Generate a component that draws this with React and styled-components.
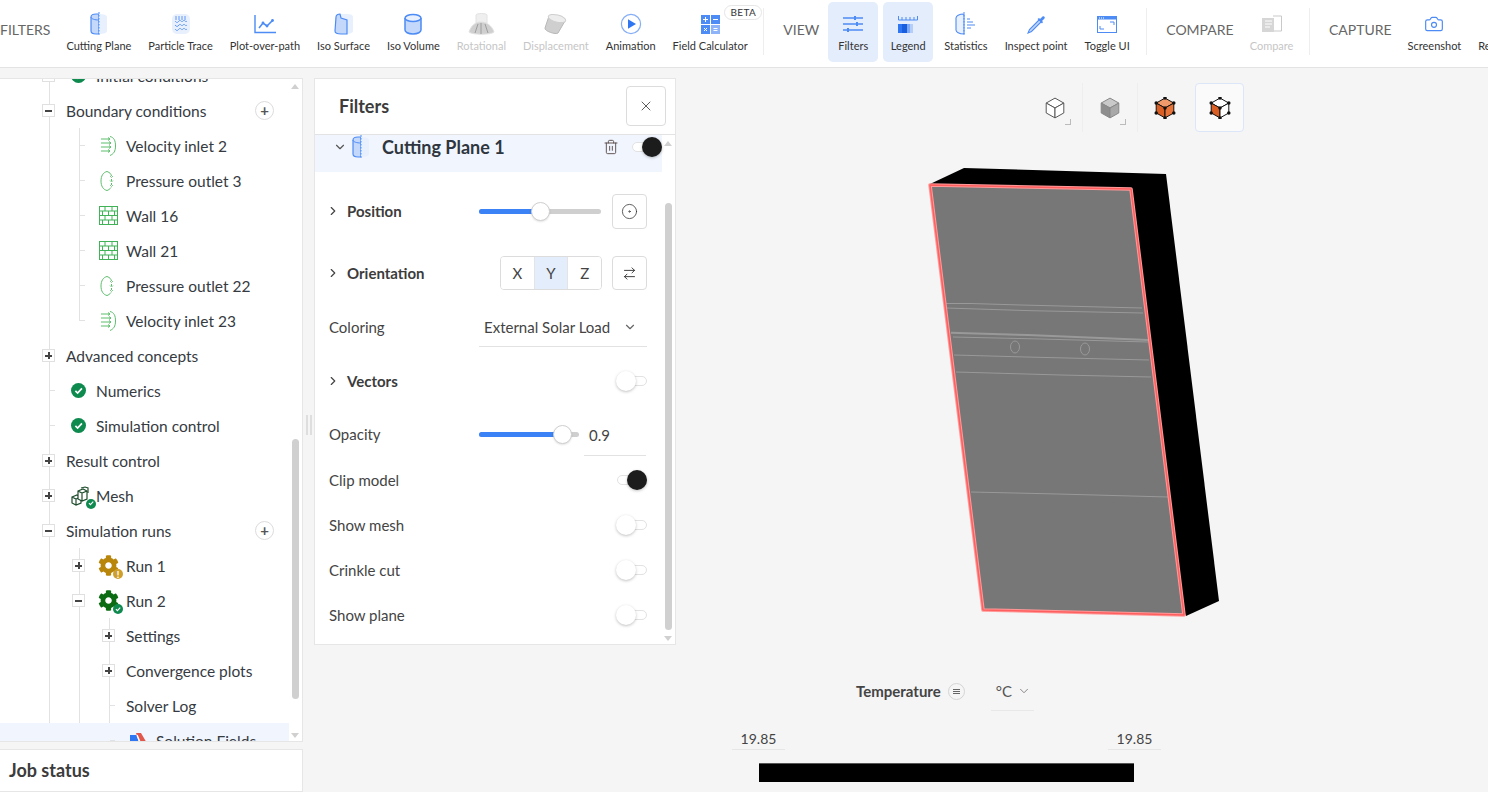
import React from 'react';
import styled, { createGlobalStyle } from 'styled-components';
import { FaCog } from 'react-icons/fa';
import { Camera, ChevronDown, ChevronRight, CircleDot, ArrowRightLeft, Trash2, X } from 'lucide-react';

const GlobalStyle = createGlobalStyle`
  html, body { margin: 0; height: 100%; overflow: hidden; background: #f5f5f5; }
  body { font-family: Lato, "Open Sans", sans-serif; color: #363b42; }
  * { box-sizing: border-box; }
`;

const BLUE = '#4d8bf5';
const PALE = '#c3d8fb';
const FAINT = '#e9f0fd';
const GREY = '#bdbdbd';

const CuttingPlaneIcon = () => (
  <svg width="20" height="24" viewBox="0 0 20 24">
    <path d="M10 2v20h-3c-3 0-5-1-5-3V5c0-2 2-3 5-3z" fill={PALE} stroke={BLUE} strokeWidth="1.2" />
    <path d="M10 2c5 0 8 1 8 3v14c0 2-3 3-8 3z" fill={FAINT} />
    <path d="M2 5c0 2 4 3 8 3" fill="none" stroke={BLUE} strokeWidth="1" />
    <path d="M10 0v24" stroke={BLUE} strokeWidth="1" strokeDasharray="1.5 1.5" />
  </svg>
);

const ParticleIcon = () => (
  <svg width="20" height="22" viewBox="0 0 20 22">
    <rect x="1" y="1" width="18" height="20" rx="5" fill={FAINT} />
    <path d="M5 3v4M8 3v4M11 3v4M14 3v4M4 8c2 2 2 2 4 0s2 2 4 0 2 2 4 0M4 12c2 2 2 2 4 0s2 2 4 0 2 2 4 0M4 16c2 2 2 2 4 0s2 2 4 0 2 2 4 0" fill="none" stroke={BLUE} strokeWidth="0.9" />
  </svg>
);

const PlotIcon = () => (
  <svg width="22" height="20" viewBox="0 0 22 20">
    <path d="M1 1v17.5h21" fill="none" stroke={BLUE} strokeWidth="1.4" />
    <path d="M5 14l4-5 4 3 6-6" fill="none" stroke={BLUE} strokeWidth="1.6" />
    <circle cx="9" cy="9" r="1.4" fill={BLUE} />
    <circle cx="13" cy="12" r="1.4" fill={BLUE} />
    <circle cx="18.5" cy="6.5" r="1.4" fill={BLUE} />
  </svg>
);

const IsoSurfaceIcon = () => (
  <svg width="20" height="22" viewBox="0 0 20 22">
    <path d="M6 1h7c4 0 6 1 6 3v14c0 2-3 3-7 3z" fill={FAINT} />
    <path d="M2 4c0-2 2-3 4-3l1 4 6 2v14H7c-4 0-6-1-6-3z" fill={PALE} stroke={BLUE} strokeWidth="1.2" />
  </svg>
);

const IsoVolumeIcon = () => (
  <svg width="20" height="22" viewBox="0 0 20 22">
    <path d="M2 5v12c0 2 3 4 8 4s8-2 8-4V5" fill={PALE} stroke={BLUE} strokeWidth="1.5" />
    <ellipse cx="10" cy="5" rx="8" ry="3.6" fill={FAINT} stroke={BLUE} strokeWidth="1.5" />
  </svg>
);

const RotationalIcon = () => (
  <svg width="27" height="26" viewBox="0 0 27 26">
    <path d="M8 4c0-2 11-2 11 0v8H8z" fill="#efefef" stroke="#e2e2e2" />
    <path d="M1 21c2-6 6-10 12-10s11 4 13 10c-3 3-22 3-25 0z" fill="#cfcfcf" stroke="#e2e2e2" />
    <path d="M10 13l-3 9M13 12v11M17 13l3 9" stroke="#9e9e9e" />
  </svg>
);

const DisplacementIcon = () => (
  <svg width="24" height="22" viewBox="0 0 24 22">
    <path d="M5 3L1 15c-1 3 11 7 13 5l7-12z" fill="#cfcfcf" stroke="#b8b8b8" />
    <ellipse cx="13" cy="5.5" rx="9" ry="3.6" transform="rotate(14 13 5.5)" fill="#ededed" stroke="#cfcfcf" />
  </svg>
);

const AnimationIcon = () => (
  <svg width="22" height="22" viewBox="0 0 22 22">
    <circle cx="11" cy="11" r="9.6" fill="#fff" stroke="#86aef6" strokeWidth="1.2" />
    <path d="M8 6.3l8 4.7-8 4.7z" fill="#2f76f2" />
  </svg>
);

const CalculatorIcon = () => (
  <svg width="19" height="19" viewBox="0 0 19 19">
    <rect width="9" height="9" fill={BLUE} />
    <rect x="10" width="9" height="9" fill={BLUE} />
    <rect y="10" width="9" height="9" fill={BLUE} />
    <rect x="10" y="10" width="9" height="9" fill="#8db4f8" />
    <path d="M2 4.5h5M4.5 2v5M12 4.5h5M12.5 13.5h4M12.5 15.5h4M3 13l3 3M6 13l-3 3" stroke="#fff" strokeWidth="1" />
  </svg>
);

const SlidersIcon = () => (
  <svg width="20" height="18" viewBox="0 0 20 18">
    <path d="M0 3h20M0 9h20M0 15h20" stroke={BLUE} strokeWidth="1.3" />
    <rect x="11" y="1" width="2" height="4" fill={BLUE} />
    <rect x="13" y="7" width="2" height="4" fill={BLUE} />
    <rect x="4" y="13" width="2" height="4" fill={BLUE} />
  </svg>
);

const LegendIcon = () => (
  <svg width="20" height="17" viewBox="0 0 20 17">
    <path d="M.5 0v4h19V0M4 1v3M8 1v3M12 1v3M16 1v3" fill="none" stroke={BLUE} strokeWidth="1" />
    <rect y="8" width="7" height="9" fill="#2f76f2" />
    <rect x="4" y="8" width="5" height="9" fill="#1a5ee0" />
    <rect x="9" y="8" width="3" height="9" fill="#7ea9f6" />
    <rect x="12" y="8" width="3" height="9" fill="#b4cdfa" />
  </svg>
);

const StatisticsIcon = () => (
  <svg width="22" height="24" viewBox="0 0 22 24">
    <path d="M9 2C4 2 1 4 1 6v12c0 2 3 4 8 4z" fill={FAINT} stroke={BLUE} strokeWidth="1.1" />
    <path d="M9 0v24" stroke={BLUE} strokeDasharray="1.5 1.5" />
    <path d="M12 7h3M12 10h6M12 13h8M12 16h4" stroke={BLUE} strokeWidth="1.1" />
  </svg>
);

const PipetteIcon = () => (
  <svg width="19" height="19" viewBox="0 0 19 19">
    <path d="M12.5 4.5L2.5 14.5 1 18l3.5-1.5 10-10z" fill={PALE} stroke={BLUE} strokeWidth="1.1" />
    <path d="M10.5 4L15 8.5l1-1.5-1-1 2.3-2.3c1.4-1.4-.6-3.4-2-2L13 4 12 3z" fill={BLUE} />
  </svg>
);

const ToggleUiIcon = () => (
  <svg width="20" height="17" viewBox="0 0 20 17">
    <rect x=".5" y=".5" width="19" height="16" fill="#fff" stroke={BLUE} />
    <rect width="20" height="3.5" fill={BLUE} />
    <path d="M2 2h1M4 2h1M6 2h1" stroke="#fff" />
    <path d="M13 6h4v3M3 10v3h4" fill="none" stroke={BLUE} />
  </svg>
);

const CompareIcon = () => (
  <svg width="20" height="18" viewBox="0 0 20 18">
    <path d="M11 1h8.5v15H11" fill="none" stroke="#c9c9c9" />
    <path d="M0 3h12v14H0z" fill="#d6d6d6" />
    <path d="M3 6h7M3 9h7M3 12h5" stroke="#fff" />
  </svg>
);

const VelocityIcon = () => (
  <svg width="16" height="20" viewBox="0 0 16 20" fill="none" stroke="#5cbd6b" strokeWidth="1">
    <path d="M1 3h9M1 7h10M1 11h10M1 15h9" />
    <path d="M8 1.5l2 1.5-2 1.5M9 5.5l2 1.5-2 1.5M9 9.5l2 1.5-2 1.5M8 13.5l2 1.5-2 1.5" />
    <path d="M10 .5c4 1 5.500 4 5.500 9.500s-2 8-5.500 9.500" />
  </svg>
);

const PressureIcon = () => (
  <svg width="16" height="20" viewBox="0 0 16 20" fill="none" stroke="#5cbd6b" strokeWidth="1">
    <path d="M7 .5C3 1.500 1 5 1 10s2 8.500 6 9.500" />
    <path d="M7 .5c3 1 4 2.500 4.500 4.500M11.500 8v2M11.500 12v2M11 16.500c-1 1.500-2.500 2.500-4 3" />
    <path d="M10 5l1.500 1.500L13 5M10 9.500l1.500 1.500 1.500-1.500M10 14l1.500 1.500L13 14" strokeWidth=".8" />
  </svg>
);

const WallIcon = () => (
  <svg width="19" height="19" viewBox="0 0 19 19" fill="none" stroke="#3fb356" strokeWidth="1">
    <rect x=".5" y=".5" width="18" height="18" />
    <path d="M1 5h17M1 9.500h17M1 14h17M6 1v4M13 1v4M3.500 5v4.500M9.500 5v4.500M15.500 5v4.500M6 9.500V14M13 9.500V14M3.500 14v4.500M9.500 14v4.500M15.500 14v4.500" />
  </svg>
);

const CheckCircle = styled.span`
  display: inline-flex;
  align-items: center;
  justify-content: center;
  width: ${(p) => p.$size}px;
  height: ${(p) => p.$size}px;
  border-radius: 50%;
  background: ${(p) => p.$color || '#0f8a4f'};
  flex: none;
`;

const CheckBadge = ({ size = 15 }) => (
  <CheckCircle $size={size}>
    <svg width={size * 0.62} height={size * 0.62} viewBox="0 0 10 10">
      <path d="M1.500 5.200l2.400 2.400 4.600-5" fill="none" stroke="#fff" strokeWidth="1.800" />
    </svg>
  </CheckCircle>
);

const BadgeSpot = styled.span`
  position: absolute;
  right: ${(p) => p.$right}px;
  bottom: -3px;
  display: flex;
`;

const WarnMark = styled.span`
  color: #fff;
  font-size: 9px;
  font-weight: 900;
  line-height: 1;
`;

const IconStack = styled.span`
  position: relative;
  display: flex;
  margin-left: ${(p) => p.$shift || 0}px;
`;

const MeshIcon = () => (
  <IconStack>
    <svg width="19" height="20" viewBox="0 0 19 20" fill="#fff" stroke="#1f4d2e" strokeWidth="1.200">
      <path d="M1 11l5-2 4 2v6l-5 2-4-2zM1 11l4 2 5-2M5 13v6" />
      <path d="M7 5l5-2 4 2v8l-5 2-4-2zM7 5l4 2 5-2M11 7v8" />
      <path d="M10 2l4-1 3 1v5" fill="none" />
    </svg>
    <BadgeSpot $right={-6}><CheckBadge size={10} /></BadgeSpot>
  </IconStack>
);

const GearIcon = ({ warn }) => (
  <IconStack $shift={-2}>
    <FaCog size={21} color={warn ? '#b8860b' : '#0b6b12'} />
    <BadgeSpot $right={-4}>
      {warn
        ? <CheckCircle $size={10} $color="#cf9f2e"><WarnMark>!</WarnMark></CheckCircle>
        : <CheckBadge size={10} />}
    </BadgeSpot>
  </IconStack>
);

const SolutionIcon = () => (
  <svg width="18" height="16" viewBox="0 0 18 16">
    <path d="M0 2h7l3 14H0z" fill="#2f76f2" />
    <path d="M6 0h5l7 12v4h-6z" fill="#e2574c" />
    <path d="M7 2l5 12" stroke="#fff" strokeWidth="1.500" />
  </svg>
);

const Hex = ({ top, left, right, stroke = '#555', dots }) => {
  const points = [[10, 1], [18, 5.500], [18, 14.500], [10, 19], [2, 14.500], [2, 5.500], [10, 10]];
  return (
    <svg width="22" height="22" viewBox="0 0 20 20">
      <path d="M10 1l8 4.500L10 10 2 5.500z" fill={top} stroke={stroke} strokeWidth=".9" />
      <path d="M2 5.500L10 10v9l-8-4.500z" fill={left} stroke={stroke} strokeWidth=".9" />
      <path d="M18 5.500L10 10v9l8-4.500z" fill={right} stroke={stroke} strokeWidth=".9" />
      {dots && points.map(([x, y]) => <circle key={`${x}-${y}`} cx={x} cy={y} r="1.600" fill="#111" />)}
    </svg>
  );
};

const filterTools = [
  { label: 'Cutting Plane', icon: <CuttingPlaneIcon /> },
  { label: 'Particle Trace', icon: <ParticleIcon /> },
  { label: 'Plot-over-path', icon: <PlotIcon /> },
  { label: 'Iso Surface', icon: <IsoSurfaceIcon /> },
  { label: 'Iso Volume', icon: <IsoVolumeIcon /> },
  { label: 'Rotational', icon: <RotationalIcon />, off: true },
  { label: 'Displacement', icon: <DisplacementIcon />, off: true },
  { label: 'Animation', icon: <AnimationIcon /> },
  { label: 'Field Calculator', icon: <CalculatorIcon />, beta: true },
];

const viewTools = [
  { label: 'Filters', icon: <SlidersIcon />, active: true },
  { label: 'Legend', icon: <LegendIcon />, active: true },
  { label: 'Statistics', icon: <StatisticsIcon /> },
  { label: 'Inspect point', icon: <PipetteIcon /> },
  { label: 'Toggle UI', icon: <ToggleUiIcon /> },
];

const Page = styled.div`
  width: 1488px;
  height: 792px;
  overflow: hidden;
  display: flex;
  flex-direction: column;
`;

const Toolbar = styled.header`
  height: 68px;
  flex: none;
  background: #fff;
  border-bottom: 1px solid #e3e3e3;
  display: flex;
  align-items: flex-start;
  white-space: nowrap;
  overflow: hidden;
`;

const SectionLabel = styled.span`
  font-size: 14px;
  line-height: 60px;
  color: #666;
  margin-right: ${(p) => p.$gap}px;
`;

const Tool = styled.button`
  position: relative;
  flex: none;
  height: 60px;
  margin: 2px ${(p) => (p.$active ? 2.5 : 0)}px 0;
  padding: 0;
  width: ${(p) => (p.$active ? '50px' : 'auto')};
  padding-inline: ${(p) => (p.$active ? 0 : 8.5)}px;
  border: 0;
  border-radius: 5px;
  background: ${(p) => (p.$active ? '#e4edfc' : 'transparent')};
  display: flex;
  flex-direction: column;
  align-items: center;
  font-family: inherit;
  font-size: 11px;
  color: ${(p) => (p.$off ? '#c6c6c6' : '#333')};
`;

const ToolIcon = styled.span`
  height: 37px;
  display: flex;
  align-items: center;
  justify-content: center;
  padding-top: 7px;
`;

const ToolText = styled.span`
  line-height: 14px;
`;

const Beta = styled.span`
  position: absolute;
  top: 3px;
  right: -6px;
  padding: 0 5px;
  height: 15px;
  line-height: 13px;
  border: 1px solid #e6e6e6;
  border-radius: 8px;
  background: #fff;
  font-size: 10px;
  letter-spacing: .4px;
`;

const Rule = styled.i`
  flex: none;
  width: 1px;
  height: 47px;
  margin: 8px 19px 0 ${(p) => p.$left}px;
  background: #eee;
`;

const Workspace = styled.main`
  flex: 1;
  min-height: 0;
  display: flex;
`;

const LeftColumn = styled.div`
  flex: none;
  width: 303px;
  padding-top: 10px;
  display: flex;
  flex-direction: column;
  gap: 7px;
`;

const TreePanel = styled.section`
  position: relative;
  height: 664px;
  background: #fff;
  border: 1px solid #e6e6e6;
  border-left: 0;
  overflow: hidden;
`;

const Tree = styled.div`
  margin-top: -21px;
  width: 289px;
`;

const Branch = styled.div`
  position: relative;
  &::before {
    content: "";
    position: absolute;
    left: ${(p) => 49 + p.$depth * 30}px;
    top: 0;
    bottom: ${(p) => (p.$open ? '-20px' : '17px')};
    width: 1px;
    background: #e2e2e2;
  }
`;

const Row = styled.div`
  position: relative;
  height: 35px;
  display: flex;
  align-items: center;
  font-size: 15.500px;
  padding: 0 15px 0 ${(p) => 42 + p.$depth * 30}px;
  background: ${(p) => (p.$selected ? '#f1f6fe' : 'transparent')};
  z-index: 1;
`;

const Tick = styled.span`
  position: absolute;
  left: ${(p) => 50 + p.$depth * 30}px;
  top: 17px;
  width: 5px;
  height: 1px;
  background: #e2e2e2;
`;

const Expander = styled.span`
  position: relative;
  flex: none;
  width: 13px;
  height: 13px;
  margin-right: 11px;
  background: #fff;
  border: 1px solid #e0e0e0;
  &::before {
    content: "";
    position: absolute;
    left: 2px;
    right: 2px;
    top: 5px;
    height: 1.500px;
    background: #444;
  }
  &::after {
    content: ${(p) => (p.$open ? 'none' : '""')};
    position: absolute;
    top: 2px;
    bottom: 2px;
    left: 5px;
    width: 1.500px;
    background: #444;
  }
`;

const Spacer = styled.span`
  flex: none;
  width: 24px;
`;

const NodeIcon = styled.span`
  flex: none;
  width: 30px;
  padding-left: ${(p) => p.$pad ?? 4}px;
  display: flex;
  align-items: center;
`;

const AddButton = styled.span`
  margin-left: auto;
  width: 19px;
  height: 19px;
  border: 1px solid #dcdcdc;
  border-radius: 50%;
  display: flex;
  align-items: center;
  justify-content: center;
  font-size: 15px;
  font-weight: 700;
  line-height: 1;
  color: #555;
`;

const ScrollArrow = styled.span`
  position: absolute;
  left: ${(p) => p.$left}px;
  ${(p) => (p.$down ? `bottom: ${p.$offset}px` : `top: ${p.$offset}px`)};
  border-left: 4.500px solid transparent;
  border-right: 4.500px solid transparent;
  ${(p) => (p.$down ? 'border-top' : 'border-bottom')}: 5px solid #d0d0d0;
`;

const ScrollThumb = styled.span`
  position: absolute;
  left: ${(p) => p.$left}px;
  top: ${(p) => p.$top}px;
  width: 7px;
  height: ${(p) => p.$height}px;
  border-radius: 4px;
  background: #d0d0d0;
`;

const JobStatus = styled.div`
  flex: 1;
  background: #fff;
  border: 1px solid #e6e6e6;
  border-left: 0;
  padding-left: 9px;
  font-size: 18px;
  font-weight: 700;
  line-height: 41px;
  color: #3c3c3c;
`;

const Grip = styled.div`
  flex: none;
  width: 11px;
  padding: 347px 0 0 3px;
  display: flex;
  gap: 2px;
  &::before, &::after {
    content: "";
    width: 2px;
    height: 20px;
    background: #dedede;
  }
`;

const FilterPanel = styled.section`
  position: relative;
  flex: none;
  width: 362px;
  height: 567px;
  margin-top: 10px;
  background: #fff;
  border: 1px solid #e6e6e6;
  overflow: hidden;
`;

const PanelHead = styled.div`
  height: 56px;
  display: flex;
  align-items: center;
  justify-content: space-between;
  padding: 0 9px 2px 24px;
  border-bottom: 1px solid #e3e3e3;
  font-size: 18px;
  font-weight: 700;
  color: #3c3c3c;
`;

const IconButton = styled.span`
  flex: none;
  width: ${(p) => p.$w}px;
  height: ${(p) => p.$h}px;
  display: flex;
  align-items: center;
  justify-content: center;
  background: #fff;
  border: 1px solid #dcdcdc;
  border-radius: 4px;
  color: #333;
`;

const ItemRow = styled.div`
  width: 347px;
  height: 37px;
  padding: 0 0 13px 18px;
  display: flex;
  align-items: center;
  background: #f1f6fe;
  font-size: 18px;
  font-weight: 700;
  color: #2f3640;
`;

const ItemIcon = styled.span`
  display: flex;
  margin: 0 11px 0 4px;
`;

const Actions = styled.span`
  margin-left: auto;
  display: flex;
  align-items: center;
  gap: 13px;
`;

const Body = styled.div`
  padding: 8px 28px 0 14px;
`;

const FieldRow = styled.div`
  height: ${(p) => p.$h}px;
  margin-top: ${(p) => p.$gap || 0}px;
  display: flex;
  align-items: center;
  font-size: 15px;
  color: #444;
`;

const FieldName = styled.span`
  display: flex;
  align-items: center;
  width: 150px;
  font-weight: ${(p) => (p.$strong ? 700 : 400)};
  color: ${(p) => (p.$strong ? '#3c3c3c' : '#444')};
`;

const Caret = styled.span`
  display: flex;
  width: 21px;
  margin-left: -3px;
  color: #444;
`;

const Slider = styled.span`
  position: relative;
  width: ${(p) => p.$w}px;
  height: 5px;
  border-radius: 3px;
  background: #cfcfcf;
`;

const SliderFill = styled.span`
  position: absolute;
  inset: 0 auto 0 0;
  border-radius: 3px;
  background: #3b82f6;
`;

const SliderKnob = styled.span`
  position: absolute;
  top: -7px;
  width: 19px;
  height: 19px;
  margin-left: -9.500px;
  border-radius: 50%;
  background: #fff;
  border: 1px solid #cfcfcf;
  box-shadow: 0 1px 2px rgba(0, 0, 0, .12);
`;

const Push = styled.span`
  margin-left: auto;
  display: flex;
`;

const Segments = styled.span`
  display: flex;
  width: 102px;
  height: 34px;
  margin-right: 10px;
  border: 1px solid #dcdcdc;
  border-radius: 4px;
  overflow: hidden;
`;

const Segment = styled.span`
  flex: 1;
  display: flex;
  align-items: center;
  justify-content: center;
  font-size: 15px;
  color: #444;
  background: ${(p) => (p.$on ? '#e4edfc' : '#fff')};
  & + & { border-left: 1px solid #e4e4e4; }
`;

const SelectBox = styled.span`
  width: 168px;
  height: 38px;
  margin-top: 1px;
  padding: 0 10px 0 5px;
  display: flex;
  align-items: center;
  justify-content: space-between;
  border-bottom: 1px solid #e2e2e2;
`;

const ValueBox = styled.span`
  width: 62px;
  height: 42px;
  margin: 2px 0 0 5px;
  padding: 0 0 0 5px;
  display: flex;
  align-items: center;
  border-bottom: 1px solid #e2e2e2;
`;

const SwitchTrack = styled.span`
  position: relative;
  display: block;
  width: 30px;
  height: 10px;
  border: 1px solid #e2e2e2;
  border-radius: 5px;
  background: #fff;
`;

const SwitchKnob = styled.span`
  position: absolute;
  top: -6px;
  ${(p) => (p.$on ? 'right: -1px' : 'left: -2px')};
  width: 20px;
  height: 20px;
  border-radius: 50%;
  background: ${(p) => (p.$on ? '#1c1c1c' : '#fff')};
  box-shadow: 0 1px 3px rgba(0, 0, 0, .25);
`;

const Viewport = styled.div`
  flex: 1;
  min-width: 0;
  padding-top: 15px;
`;

const CubeBar = styled.div`
  height: 49px;
  padding-right: 244px;
  display: flex;
  justify-content: flex-end;
  align-items: center;
`;

const CubeSlot = styled.span`
  position: relative;
  width: 55px;
  height: 49px;
  display: flex;
  align-items: center;
  justify-content: center;
  & + & { border-left: 1px solid ${(p) => (p.$plain ? 'transparent' : '#eeeeee')}; }
  ${(p) => p.$corner && `&::after {
    content: "";
    position: absolute;
    right: 11px;
    bottom: 7px;
    width: 5px;
    height: 5px;
    border-right: 1px solid #bbb;
    border-bottom: 1px solid #bbb;
  }`}
`;

const CubeSelected = styled.span`
  width: 49px;
  height: 49px;
  margin-left: 3px;
  display: flex;
  align-items: center;
  justify-content: center;
  background: #fafafa;
  border: 1px solid #dbe6f8;
  border-radius: 4px;
`;

const Model = styled.svg`
  display: block;
  margin: 28px 0 0 245px;
`;

const LegendBlock = styled.div`
  width: 429px;
  margin: 46px 0 0 56px;
`;

const LegendHead = styled.div`
  height: 40px;
  display: flex;
  align-items: center;
  padding-left: 124px;
  font-size: 15px;
`;

const LegendTitle = styled.b`
  font-weight: 700;
  color: #444;
`;

const InfoDot = styled.span`
  width: 17px;
  height: 17px;
  margin: 0 26px 0 7px;
  display: flex;
  flex-direction: column;
  align-items: center;
  justify-content: center;
  gap: 1px;
  border: 1px solid #d4d4d4;
  border-radius: 50%;
  i { width: 7px; height: 1px; background: #666; }
`;

const UnitSelect = styled.span`
  width: 43px;
  height: 40px;
  padding: 0 3px 0 5px;
  display: flex;
  align-items: center;
  justify-content: space-between;
  border-bottom: 1px solid #e8e8e8;
  color: #555;
`;

const RangeRow = styled.div`
  display: flex;
  justify-content: space-between;
  margin-top: 18px;
`;

const RangeValue = styled.span`
  width: 53px;
  height: 21px;
  border-bottom: 1px solid #e6e6e6;
  font-size: 14px;
  line-height: 20px;
  text-align: center;
  color: #444;
`;

const ColorBar = styled.div`
  height: 19px;
  margin: 13px 27px 0;
  background: #000;
  border-top: 1px solid #555;
`;

const Switch = ({ on }) => (
  <SwitchTrack><SwitchKnob $on={on} /></SwitchTrack>
);

const SliderBar = ({ width, value }) => (
  <Slider $w={width}>
    <SliderFill style={{ width: `${value}%` }} />
    <SliderKnob style={{ left: `${value}%` }} />
  </Slider>
);

const ToolButton = ({ tool }) => (
  <Tool $active={tool.active} $off={tool.off}>
    <ToolIcon>{tool.icon}</ToolIcon>
    <ToolText>{tool.label}</ToolText>
    {tool.beta && <Beta>BETA</Beta>}
  </Tool>
);

const Node = ({ depth, open, leaf, icon, pad, add, selected, children }) => (
  <Row $depth={depth} $selected={selected}>
    {leaf ? <><Tick $depth={depth} /><Spacer /></> : <Expander $open={open} />}
    {icon && <NodeIcon $pad={pad}>{icon}</NodeIcon>}
    <span>{children}</span>
    {add && <AddButton>+</AddButton>}
  </Row>
);

const SwitchField = ({ label, on }) => (
  <FieldRow $h={45}>
    <FieldName>{label}</FieldName>
    <Push><Switch on={on} /></Push>
  </FieldRow>
);

export default function App() {
  return (
    <Page>
      <GlobalStyle />
      <Toolbar>
        <SectionLabel $gap={7.500}>FILTERS</SectionLabel>
        {filterTools.map((tool) => <ToolButton key={tool.label} tool={tool} />)}
        <Rule $left={7} />
        <SectionLabel $gap={6.500}>VIEW</SectionLabel>
        {viewTools.map((tool) => <ToolButton key={tool.label} tool={tool} />)}
        <Rule $left={8} />
        <SectionLabel $gap={7.500}>COMPARE</SectionLabel>
        <ToolButton tool={{ label: 'Compare', icon: <CompareIcon />, off: true }} />
        <Rule $left={7} />
        <SectionLabel $gap={7.500}>CAPTURE</SectionLabel>
        <ToolButton tool={{ label: 'Screenshot', icon: <Camera size={20} color={BLUE} strokeWidth={1.4} /> }} />
        <ToolButton tool={{ label: 'Reports', icon: null }} />
      </Toolbar>

      <Workspace>
        <LeftColumn>
          <TreePanel>
            <Tree>
              <Branch $depth={0} $open>
                <Node depth={0} open icon={<CheckBadge />} pad={5}>Initial conditions</Node>
                <Node depth={0} open add>Boundary conditions</Node>
                <Branch $depth={1}>
                  <Node depth={1} leaf icon={<VelocityIcon />}>Velocity inlet 2</Node>
                  <Node depth={1} leaf icon={<PressureIcon />}>Pressure outlet 3</Node>
                  <Node depth={1} leaf icon={<WallIcon />} pad={3}>Wall 16</Node>
                  <Node depth={1} leaf icon={<WallIcon />} pad={3}>Wall 21</Node>
                  <Node depth={1} leaf icon={<PressureIcon />}>Pressure outlet 22</Node>
                  <Node depth={1} leaf icon={<VelocityIcon />}>Velocity inlet 23</Node>
                </Branch>
                <Node depth={0}>Advanced concepts</Node>
                <Node depth={0} leaf icon={<CheckBadge />} pad={5}>Numerics</Node>
                <Node depth={0} leaf icon={<CheckBadge />} pad={5}>Simulation control</Node>
                <Node depth={0}>Result control</Node>
                <Node depth={0} icon={<MeshIcon />} pad={5}>Mesh</Node>
                <Node depth={0} open add>Simulation runs</Node>
                <Branch $depth={1}>
                  <Node depth={1} icon={<GearIcon warn />}>Run 1</Node>
                  <Node depth={1} open icon={<GearIcon />}>Run 2</Node>
                  <Branch $depth={2} $open>
                    <Node depth={2}>Settings</Node>
                    <Node depth={2}>Convergence plots</Node>
                    <Node depth={2} leaf>Solver Log</Node>
                    <Node depth={2} leaf selected icon={<SolutionIcon />}>Solution Fields</Node>
                  </Branch>
                </Branch>
              </Branch>
            </Tree>
            <ScrollArrow $left={291} $offset={5} />
            <ScrollThumb $left={292} $top={360} $height={260} />
            <ScrollArrow $left={291} $offset={3} $down />
          </TreePanel>
          <JobStatus>Job status</JobStatus>
        </LeftColumn>

        <Grip />

        <FilterPanel>
          <PanelHead>
            Filters
            <IconButton $w={40} $h={40}><X size={16} strokeWidth={1.200} /></IconButton>
          </PanelHead>
          <ItemRow>
            <ChevronDown size={14} color="#555" />
            <ItemIcon><CuttingPlaneIcon /></ItemIcon>
            Cutting Plane 1
            <Actions>
              <Trash2 size={16} color="#5a4a4a" strokeWidth={1.400} />
              <Switch on />
            </Actions>
          </ItemRow>
          <Body>
            <FieldRow $h={62}>
              <FieldName $strong><Caret><ChevronRight size={14} /></Caret>Position</FieldName>
              <SliderBar width={122} value={50} />
              <Push><IconButton $w={35} $h={35}><CircleDot size={17} strokeWidth={1.100} /></IconButton></Push>
            </FieldRow>
            <FieldRow $h={62}>
              <FieldName $strong><Caret><ChevronRight size={14} /></Caret>Orientation</FieldName>
              <Push>
                <Segments>
                  <Segment>X</Segment>
                  <Segment $on>Y</Segment>
                  <Segment>Z</Segment>
                </Segments>
                <IconButton $w={35} $h={34}><ArrowRightLeft size={15} strokeWidth={1.500} /></IconButton>
              </Push>
            </FieldRow>
            <FieldRow $h={46}>
              <FieldName>Coloring</FieldName>
              <SelectBox>External Solar Load<ChevronDown size={14} color="#666" /></SelectBox>
            </FieldRow>
            <FieldRow $h={46} $gap={8}>
              <FieldName $strong><Caret><ChevronRight size={14} /></Caret>Vectors</FieldName>
              <Push><Switch /></Push>
            </FieldRow>
            <FieldRow $h={46} $gap={7}>
              <FieldName>Opacity</FieldName>
              <SliderBar width={100} value={83} />
              <ValueBox>0.9</ValueBox>
            </FieldRow>
            <SwitchField label="Clip model" on />
            <SwitchField label="Show mesh" />
            <SwitchField label="Crinkle cut" />
            <SwitchField label="Show plane" />
          </Body>
          <ScrollArrow $left={349} $offset={62} />
          <ScrollThumb $left={350} $top={124} $height={427} />
          <ScrollArrow $left={349} $offset={3} $down />
        </FilterPanel>

        <Viewport>
          <CubeBar>
            <CubeSlot $corner $plain><Hex top="#fff" left="#fff" right="#fff" /></CubeSlot>
            <CubeSlot $corner><Hex top="#c9c9c9" left="#8e8e8e" right="#a8a8a8" stroke="#888" /></CubeSlot>
            <CubeSlot><Hex top="#f09a6c" left="#d95f24" right="#e8743a" stroke="#111" dots /></CubeSlot>
            <CubeSelected><Hex top="#fff" left="#d95f24" right="#fff" stroke="#111" dots /></CubeSelected>
          </CubeBar>

          <Model width="305" height="465" viewBox="920 160 305 465">
            <path d="M929 184L963 168 1165 174 1218 601 1185 616z" fill="#000" />
            <path d="M929 185L1130 189 1183 615 982 610z" fill="#777" />
            <g fill="none" stroke="#999" strokeWidth="1">
              <path d="M945 303.500h25l50 1.500 121 3" />
              <path d="M945 308l85 2.700 112 2.300" />
              <path d="M950 332.700l77 2.300 120 5" strokeWidth="2" />
              <path d="M952 337l88 2 107 3" />
              <path d="M953 355l72 2 123 3" />
              <path d="M955 372l105 3 90 2" />
              <path d="M970 492l87 2 110 3" />
              <ellipse cx="1014" cy="347" rx="4.500" ry="6" />
              <ellipse cx="1084" cy="349" rx="4.500" ry="6" />
            </g>
            <path d="M929 185L1130 189 1183 615 982 610z" fill="none" stroke="#ff9a9a" strokeWidth="3.500" strokeLinejoin="round" />
            <path d="M929 185L1130 189 1183 615 982 610z" fill="none" stroke="#ff5f5f" strokeWidth="1.500" strokeLinejoin="round" />
          </Model>

          <LegendBlock>
            <LegendHead>
              <LegendTitle>Temperature</LegendTitle>
              <InfoDot><i /><i /><i /></InfoDot>
              <UnitSelect>°C<ChevronDown size={14} color="#777" strokeWidth={1.500} /></UnitSelect>
            </LegendHead>
            <RangeRow>
              <RangeValue>19.85</RangeValue>
              <RangeValue>19.85</RangeValue>
            </RangeRow>
            <ColorBar />
          </LegendBlock>
        </Viewport>
      </Workspace>
    </Page>
  );
}
